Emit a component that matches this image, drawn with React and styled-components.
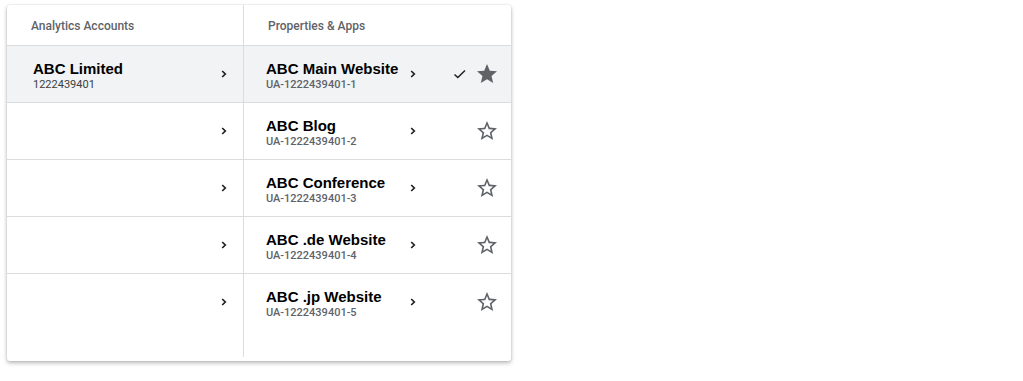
import React from "react";
import styled, { createGlobalStyle } from "styled-components";

const Global = createGlobalStyle`
  html, body { margin: 0; padding: 0; background: #fff; }
  body { font-family: Roboto, "Liberation Sans", Arial, sans-serif; }
`;

const Page = styled.div`
  padding: 5px 0 0 7px;
  width: 1023px;
  height: 381px;
  box-sizing: border-box;
`;

const Panel = styled.div`
  width: 504px;
  height: 356px;
  display: flex;
  background: #fff;
  border-radius: 3px;
  box-shadow: 0 2px 4px rgba(0, 0, 0, 0.28), 0 0 2px rgba(0, 0, 0, 0.12);
  overflow: hidden;
`;

const Column = styled.div`
  display: flex;
  flex-direction: column;
  width: ${(p) => p.$width};
  flex: ${(p) => (p.$grow ? 1 : "none")};
  border-right: ${(p) => (p.$divider ? "1px solid #dadce0" : "none")};
  margin-bottom: ${(p) => (p.$divider ? "4px" : "0")};
`;

const Header = styled.div`
  height: 41px;
  display: flex;
  align-items: center;
  padding-left: 24px;
  padding-top: 1px;
  box-sizing: border-box;
  border-bottom: 1px solid #dadce0;
  font-family: Roboto, sans-serif;
  font-size: 12px;
  font-weight: 500;
  color: #5f6368;
  flex: none;
`;

const Row = styled.div`
  height: 56px;
  display: flex;
  align-items: center;
  border-bottom: 1px solid #dadce0;
  background: ${(p) => (p.$active ? "#f1f3f4" : "#fff")};
  padding-left: ${(p) => p.$pad};
  padding-right: ${(p) => p.$padRight || "0"};
  flex: none;
  &:last-child {
    border-bottom: none;
  }
`;

const TextBlock = styled.div`
  display: flex;
  flex-direction: column;
  width: ${(p) => p.$width || "auto"};
  flex: ${(p) => (p.$grow ? 1 : "none")};
  margin-top: 2px;
`;

const Title = styled.div`
  font-family: "Liberation Sans", Arial, sans-serif;
  font-weight: 700;
  font-size: 15px;
  line-height: 17px;
  color: #000;
  white-space: nowrap;
`;

const Sub = styled.div`
  font-family: Roboto, sans-serif;
  font-size: 11px;
  font-weight: ${(p) => (p.$light ? 400 : 500)};
  line-height: 13px;
  color: ${(p) => (p.$light ? "#3c4043" : "#5f6368")};
  margin-top: 1px;
`;

const IconBox = styled.span`
  display: inline-flex;
  align-items: center;
  justify-content: center;
  width: ${(p) => p.$size}px;
  height: ${(p) => p.$size}px;
  margin-left: ${(p) => p.$ml || 0}px;
  flex: none;
`;

const Spacer = styled.div`
  flex: 1;
`;

const Chevron = () => (
  <svg width="8" height="10" viewBox="0 0 8 10">
    <path d="M2.2 2 L5.3 5 L2.2 8" fill="none" stroke="#202124" strokeWidth="1.7" />
  </svg>
);

const Check = () => (
  <svg width="14" height="12" viewBox="0 0 14 12">
    <path d="M1.5 6.5 L4.8 9.5 L12 2.5" fill="none" stroke="#202124" strokeWidth="1.5" />
  </svg>
);

const Star = ({ filled }) => (
  <svg width="24" height="24" viewBox="0 0 24 24">
    {filled ? (
      <path fill="#5f6368" d="M12 17.27L18.18 21l-1.64-7.03L22 9.24l-7.19-.61L12 2 9.19 8.63 2 9.24l5.46 4.73L5.82 21z" />
    ) : (
      <path
        fill="#5f6368"
        d="M22 9.24l-7.19-.62L12 2 9.19 8.63 2 9.24l5.46 4.73L5.82 21 12 17.27 18.18 21l-1.63-7.03L22 9.24zM12 15.4l-3.76 2.27 1-4.28-3.32-2.88 4.38-.38L12 6.1l1.71 4.04 4.38.38-3.32 2.88 1 4.28L12 15.4z"
      />
    )}
  </svg>
);

const properties = [
  { name: "ABC Main Website", id: "UA-1222439401-1", active: true },
  { name: "ABC Blog", id: "UA-1222439401-2" },
  { name: "ABC Conference", id: "UA-1222439401-3" },
  { name: "ABC .de Website", id: "UA-1222439401-4" },
  { name: "ABC .jp Website", id: "UA-1222439401-5" },
];

export default function App() {
  return (
    <>
      <Global />
      <Page>
        <Panel>
          <Column $width="236px" $divider>
            <Header>Analytics Accounts</Header>
            {properties.map((p, i) => (
              <Row key={i} $active={i === 0} $pad="26px" $padRight="14px">
                <TextBlock $grow>
                  {i === 0 && (
                    <>
                      <Title>ABC Limited</Title>
                      <Sub $light>1222439401</Sub>
                    </>
                  )}
                </TextBlock>
                <IconBox $size={10}>
                  <Chevron />
                </IconBox>
              </Row>
            ))}
          </Column>
          <Column $grow>
            <Header>Properties &amp; Apps</Header>
            {properties.map((p, i) => (
              <Row key={i} $active={p.active} $pad="22px" $padRight="12px">
                <TextBlock $width="142px">
                  <Title>{p.name}</Title>
                  <Sub>{p.id}</Sub>
                </TextBlock>
                <IconBox $size={10}>
                  <Chevron />
                </IconBox>
                <Spacer />
                {p.active && (
                  <IconBox $size={14}>
                    <Check />
                  </IconBox>
                )}
                <IconBox $size={24} $ml={8}>
                  <Star filled={p.active} />
                </IconBox>
              </Row>
            ))}
          </Column>
        </Panel>
      </Page>
    </>
  );
}
